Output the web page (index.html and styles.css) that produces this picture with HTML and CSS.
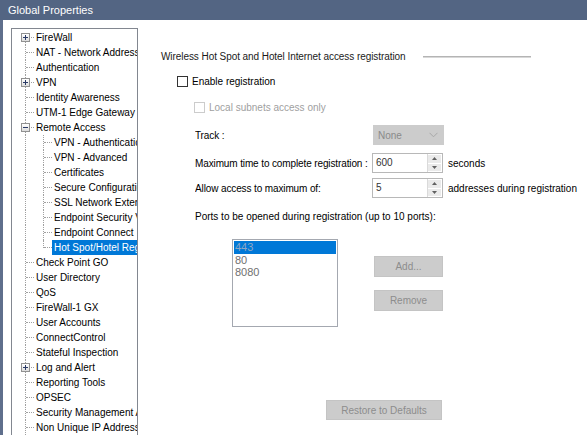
FILE: index.html
```html
<!DOCTYPE html>
<html>
<head>
<meta charset="utf-8">
<title>Global Properties</title>
<link rel="stylesheet" href="styles.css">
</head>
<body>
<div class="window">
  <div class="titlebar">Global Properties</div>
  <div class="client">
    <div class="tree">
      <div class="row first"><span class="g"><i class="exp plus"></i></span><span class="lbl">FireWall</span></div>
      <div class="row"><span class="g"></span><span class="lbl">NAT - Network Address Translation</span></div>
      <div class="row"><span class="g"></span><span class="lbl">Authentication</span></div>
      <div class="row"><span class="g"><i class="exp plus"></i></span><span class="lbl">VPN</span></div>
      <div class="row"><span class="g"></span><span class="lbl">Identity Awareness</span></div>
      <div class="row"><span class="g"></span><span class="lbl">UTM-1 Edge Gateway</span></div>
      <div class="row"><span class="g"><i class="exp minus"></i></span><span class="lbl">Remote Access</span></div>
      <div class="row"><span class="g cont"></span><span class="g2"></span><span class="lbl">VPN - Authentication and Encryption</span></div>
      <div class="row"><span class="g cont"></span><span class="g2"></span><span class="lbl">VPN - Advanced</span></div>
      <div class="row"><span class="g cont"></span><span class="g2"></span><span class="lbl">Certificates</span></div>
      <div class="row"><span class="g cont"></span><span class="g2"></span><span class="lbl">Secure Configuration Verification</span></div>
      <div class="row"><span class="g cont"></span><span class="g2"></span><span class="lbl">SSL Network Extender</span></div>
      <div class="row"><span class="g cont"></span><span class="g2"></span><span class="lbl">Endpoint Security VPN</span></div>
      <div class="row"><span class="g cont"></span><span class="g2"></span><span class="lbl">Endpoint Connect</span></div>
      <div class="row"><span class="g cont"></span><span class="g2 last"></span><span class="lbl sel">Hot Spot/Hotel Registration</span></div>
      <div class="row"><span class="g"></span><span class="lbl">Check Point GO</span></div>
      <div class="row"><span class="g"></span><span class="lbl">User Directory</span></div>
      <div class="row"><span class="g"></span><span class="lbl">QoS</span></div>
      <div class="row"><span class="g"></span><span class="lbl">FireWall-1 GX</span></div>
      <div class="row"><span class="g"></span><span class="lbl">User Accounts</span></div>
      <div class="row"><span class="g"></span><span class="lbl">ConnectControl</span></div>
      <div class="row"><span class="g"></span><span class="lbl">Stateful Inspection</span></div>
      <div class="row"><span class="g"><i class="exp plus"></i></span><span class="lbl">Log and Alert</span></div>
      <div class="row"><span class="g"></span><span class="lbl">Reporting Tools</span></div>
      <div class="row"><span class="g"></span><span class="lbl">OPSEC</span></div>
      <div class="row"><span class="g"></span><span class="lbl">Security Management Access</span></div>
      <div class="row"><span class="g"></span><span class="lbl">Non Unique IP Address Ranges</span></div>
    </div>

    <div class="panel">
      <div class="heading"><span>Wireless Hot Spot and Hotel Internet access registration</span><span class="rule"></span></div>

      <div class="check-row enable"><span class="cb"></span><span>Enable registration</span></div>
      <div class="check-row local disabled"><span class="cb"></span><span>Local subnets access only</span></div>

      <div class="field track"><span class="flabel">Track :</span><span class="combo"><span>None</span><svg class="chev" width="9" height="6" viewBox="0 0 9 6"><path d="M0.5 0.8 L4.5 4.8 L8.5 0.8" fill="none" stroke="#a8a8a8" stroke-width="1"/></svg></span></div>

      <div class="field maxtime"><span class="flabel">Maximum time to complete registration :</span><span class="spin"><span class="val">600</span><span class="arrows"><span class="up"><svg width="5" height="3" viewBox="0 0 5 3"><path d="M2.5 0 L5 3 L0 3Z" fill="#606060"/></svg></span><span class="dn"><svg width="5" height="3" viewBox="0 0 5 3"><path d="M0 0 L5 0 L2.5 3Z" fill="#606060"/></svg></span></span></span><span class="suffix">seconds</span></div>

      <div class="field allow"><span class="flabel">Allow access to maximum of:</span><span class="spin"><span class="val">5</span><span class="arrows"><span class="up"><svg width="5" height="3" viewBox="0 0 5 3"><path d="M2.5 0 L5 3 L0 3Z" fill="#606060"/></svg></span><span class="dn"><svg width="5" height="3" viewBox="0 0 5 3"><path d="M0 0 L5 0 L2.5 3Z" fill="#606060"/></svg></span></span></span><span class="suffix">addresses during registration</span></div>

      <div class="ports-label">Ports to be opened during registration (up to 10 ports):</div>

      <div class="ports">
        <div class="listbox">
          <div class="item selected">443</div>
          <div class="item">80</div>
          <div class="item">8080</div>
        </div>
        <div class="btns">
          <div class="btn">Add...</div>
          <div class="btn">Remove</div>
        </div>
      </div>

      <div class="btn restore">Restore to Defaults</div>
    </div>
  </div>
</div>
</body>
</html>
```

FILE: styles.css
```css
* { box-sizing: border-box; }
html, body {
  margin: 0;
  padding: 0;
  width: 587px;
  height: 435px;
  overflow: hidden;
  background: #ffffff;
}
body {
  font-family: "Liberation Sans", Arial, sans-serif;
  font-size: 10px;
  color: #000;
}
.window {
  width: 587px;
  height: 435px;
  display: flex;
  flex-direction: column;
}
.titlebar {
  height: 20px;
  flex: none;
  background: #536583;
  color: #ffffff;
  font-size: 11px;
  line-height: 20px;
  padding-left: 8px;
}
.client {
  flex: 1;
  display: flex;
  border-left: 3px solid #5f6f8c;
  padding: 8px 0 0 8px;
  min-height: 0;
}

/* tree */
.tree {
  width: 127px;
  flex: none;
  border: 1px solid #828790;
  border-bottom: none;
  padding-top: 1px;
  overflow: hidden;
  background: #fff;
}
.row {
  height: 15px;
  display: flex;
  align-items: center;
  white-space: nowrap;
}
.g, .g2 {
  position: relative;
  height: 15px;
  flex: none;
}
.g { width: 22px; }
.g2 { width: 18px; }
.g::before {
  content: "";
  position: absolute;
  left: 13px;
  top: 0;
  bottom: 0;
  border-left: 1px dotted #a0a0a0;
}
.first .g::before { top: 7px; }
.g::after {
  content: "";
  position: absolute;
  left: 14px;
  width: 8px;
  top: 7px;
  border-top: 1px dotted #a0a0a0;
}
.g.cont::after { display: none; }
.g2::before {
  content: "";
  position: absolute;
  left: 9px;
  top: 0;
  bottom: 0;
  border-left: 1px dotted #a0a0a0;
}
.g2.last::before { bottom: 7px; }
.g2::after {
  content: "";
  position: absolute;
  left: 10px;
  width: 8px;
  top: 7px;
  border-top: 1px dotted #a0a0a0;
}
.exp {
  position: absolute;
  left: 9px;
  top: 3px;
  width: 9px;
  height: 9px;
  border: 1px solid #919191;
  background: linear-gradient(#ffffff, #dcdcdc);
  z-index: 1;
}
.exp::before {
  content: "";
  position: absolute;
  left: 1px;
  top: 3px;
  width: 5px;
  height: 1px;
  background: #2a3a66;
}
.exp.plus::after {
  content: "";
  position: absolute;
  left: 3px;
  top: 1px;
  width: 1px;
  height: 5px;
  background: #2a3a66;
}
.lbl {
  padding: 0 2px;
  height: 15px;
  line-height: 15px;
}
.lbl.sel {
  background: #0078d7;
  color: #fff;
  flex: 1;
}

/* panel */
.panel {
  flex: 1;
  padding: 21px 0 0 23px;
  display: flex;
  flex-direction: column;
  align-items: flex-start;
  color: #000;
  white-space: nowrap;
}
.heading {
  height: 14px;
  display: flex;
  align-items: center;
  color: #1a1a1a;
  letter-spacing: -0.07px;
}
.rule {
  width: 108px;
  height: 2px;
  margin-left: 17px;
  margin-top: 1px;
  border-top: 1px solid #b4b4b4;
  border-bottom: 1px solid #d8d8d8;
}
.check-row {
  height: 14px;
  display: flex;
  align-items: center;
  gap: 4px;
}
.cb {
  width: 11px;
  height: 11px;
  border: 1px solid #333333;
  background: #fff;
}
.enable { margin: 11px 0 0 16px; }
.local { margin: 12px 0 0 33px; }
.disabled { color: #a0a0a0; }
.disabled .cb { border-color: #cccccc; }

.field {
  display: flex;
  align-items: center;
  height: 20px;
  margin-left: 34px;
}
.flabel {
  width: 177px;
  flex: none;
  letter-spacing: -0.12px;
  overflow: hidden;
}
.track { margin-top: 11px; }
.maxtime { margin-top: 8px; }
.allow { margin-top: 5px; }
.combo {
  width: 71px;
  height: 20px;
  margin-left: 1px;
  background: #cccccc;
  color: #8a8a8a;
  display: flex;
  align-items: center;
  justify-content: space-between;
  padding: 0 6px 0 5px;
}
.chev { display: block; }
.spin {
  width: 71px;
  height: 20px;
  border: 1px solid #b8b8b8;
  display: flex;
  align-items: stretch;
  background: #fff;
}
.val {
  flex: 1;
  padding-left: 3px;
  line-height: 18px;
  color: #333;
}
.arrows {
  width: 15px;
  display: flex;
  flex-direction: column;
  border-left: 1px solid #dadada;
  padding: 1px 1px 1px 0;
  gap: 1px;
}
.up, .dn {
  flex: 1;
  background: #eaeaea;
  display: flex;
  align-items: center;
  justify-content: center;
}
.up svg, .dn svg { display: block; }
.suffix { margin-left: 5px; }

.ports-label {
  height: 14px;
  line-height: 14px;
  margin: 12px 0 0 34px;
}
.ports {
  display: flex;
  margin: 15px 0 0 71px;
}
.listbox {
  width: 106px;
  height: 88px;
  border: 1px solid #a4a8b0;
  padding: 1px;
  font-size: 11px;
  color: #707070;
}
.item {
  height: 12px;
  line-height: 12px;
  padding-left: 1px;
}
.item.selected {
  height: 13px;
  line-height: 13px;
  background: #0078d7;
  color: #8ea6c4;
}
.btns {
  margin-left: 36px;
  padding-top: 17px;
  display: flex;
  flex-direction: column;
  gap: 13px;
}
.btn {
  width: 69px;
  height: 21px;
  background: #cccccc;
  border: 1px solid #c4c4c4;
  color: #8d8d8d;
  display: flex;
  align-items: center;
  justify-content: center;
}
.btn.restore {
  width: 116px;
  height: 20px;
  margin: 73px 0 0 165px;
}
```
